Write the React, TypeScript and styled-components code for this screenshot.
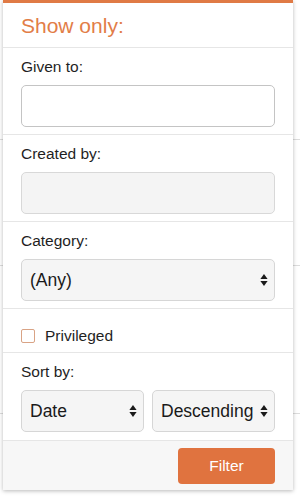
import React from "react";
import styled, { createGlobalStyle } from "styled-components";

const Global = createGlobalStyle`
  html, body { margin: 0; padding: 0; background: #ffffff; }
  * { box-sizing: border-box; }
`;

const Page = styled.div`
  position: relative;
  width: 300px;
  height: 496px;
  overflow: hidden;
  background: #ffffff;
  font-family: "Liberation Sans", Arial, Helvetica, sans-serif;
`;

const Backdrop = styled.div`
  display: flex;
  flex-direction: column;
`;

const BackRow = styled.div<{ $h: number }>`
  height: ${(p) => p.$h}px;
  border-bottom: 1px solid #dcdcdc;
`;

const Panel = styled.div`
  position: absolute;
  left: 3px;
  top: 0;
  width: 290px;
  display: flex;
  flex-direction: column;
  background: #ffffff;
  border-top: 3px solid #e07a45;
  box-shadow: 0 1px 4px rgba(0, 0, 0, 0.28);
`;

const Title = styled.div`
  height: 45px;
  padding: 2px 18px 0;
  display: flex;
  align-items: center;
  font-size: 21px;
  color: #e27d47;
  border-bottom: 1px solid #e6e6e6;
`;

const Section = styled.div<{ $top?: number; $bottom?: number }>`
  display: flex;
  flex-direction: column;
  gap: 8px;
  padding: ${(p) => p.$top ?? 9}px 18px ${(p) => p.$bottom ?? 7}px;
  border-bottom: 1px solid #e6e6e6;
`;

const Label = styled.div`
  height: 20px;
  line-height: 20px;
  font-size: 15.5px;
  color: #1f1f1f;
`;

const TextInput = styled.input`
  width: 100%;
  height: 42px;
  border: 1px solid #c4c4c4;
  border-radius: 5px;
  background: #ffffff;
  font: inherit;
  font-size: 17px;
  padding: 0 8px;
  outline: none;
  &:disabled {
    background: #f4f4f4;
    border-color: #d8d8d8;
  }
`;

const SelectWrap = styled.div`
  position: relative;
  flex: 1;
  min-width: 0;
`;

const NativeSelect = styled.select`
  appearance: none;
  -webkit-appearance: none;
  width: 100%;
  height: 42px;
  border: 1px solid #d6d6d6;
  border-radius: 5px;
  background: #f5f5f5;
  color: #1a1a1a;
  font-family: "Liberation Sans", Arial, Helvetica, sans-serif;
  font-size: 17.5px;
  padding: 0 20px 0 8px;
  outline: none;
`;

const Arrows = styled.svg`
  position: absolute;
  right: 7px;
  top: 50%;
  transform: translateY(-50%);
  pointer-events: none;
`;

const SortRow = styled.div`
  display: flex;
  gap: 8px;
`;

const CheckRow = styled.label`
  display: flex;
  align-items: center;
  gap: 10px;
  height: 20px;
  font-size: 15.5px;
  color: #1f1f1f;
`;

const Box = styled.span`
  width: 14px;
  height: 14px;
  border: 1px solid #d9a385;
  border-radius: 2px;
  background: #ffffff;
`;

const Footer = styled.div`
  display: flex;
  justify-content: flex-end;
  padding: 7px 18px 6px;
  background: #f7f7f7;
`;

const FilterButton = styled.button`
  width: 97px;
  height: 36px;
  border: none;
  border-radius: 4px;
  background: #e0733f;
  color: #ffffff;
  font-family: "Liberation Sans", Arial, Helvetica, sans-serif;
  font-size: 15.5px;
`;

const ArrowIcon = () => (
  <Arrows width="8" height="14" viewBox="0 0 8 14">
    <path d="M4 1 L7.6 6 L0.4 6 Z" fill="#1a1a1a" />
    <path d="M4 13 L7.6 8 L0.4 8 Z" fill="#1a1a1a" />
  </Arrows>
);

const Select = ({ value, options }: { value: string; options: string[] }) => (
  <SelectWrap>
    <NativeSelect defaultValue={value}>
      {options.map((o) => (
        <option key={o} value={o}>
          {o}
        </option>
      ))}
    </NativeSelect>
    <ArrowIcon />
  </SelectWrap>
);

export default function App() {
  return (
    <Page>
      <Global />
      <Backdrop>
        <BackRow $h={140} />
        <BackRow $h={126} />
        <BackRow $h={148} />
      </Backdrop>
      <Panel>
        <Title>Show only:</Title>
        <Section>
          <Label>Given to:</Label>
          <TextInput type="text" />
        </Section>
        <Section>
          <Label>Created by:</Label>
          <TextInput type="text" disabled />
        </Section>
        <Section>
          <Label>Category:</Label>
          <Select value="(Any)" options={["(Any)", "General", "Special"]} />
        </Section>
        <Section $top={17} $bottom={6}>
          <CheckRow>
            <Box />
            Privileged
          </CheckRow>
        </Section>
        <Section $bottom={8}>
          <Label>Sort by:</Label>
          <SortRow>
            <Select value="Date" options={["Date", "Name"]} />
            <Select value="Descending" options={["Descending", "Ascending"]} />
          </SortRow>
        </Section>
        <Footer>
          <FilterButton>Filter</FilterButton>
        </Footer>
      </Panel>
    </Page>
  );
}
